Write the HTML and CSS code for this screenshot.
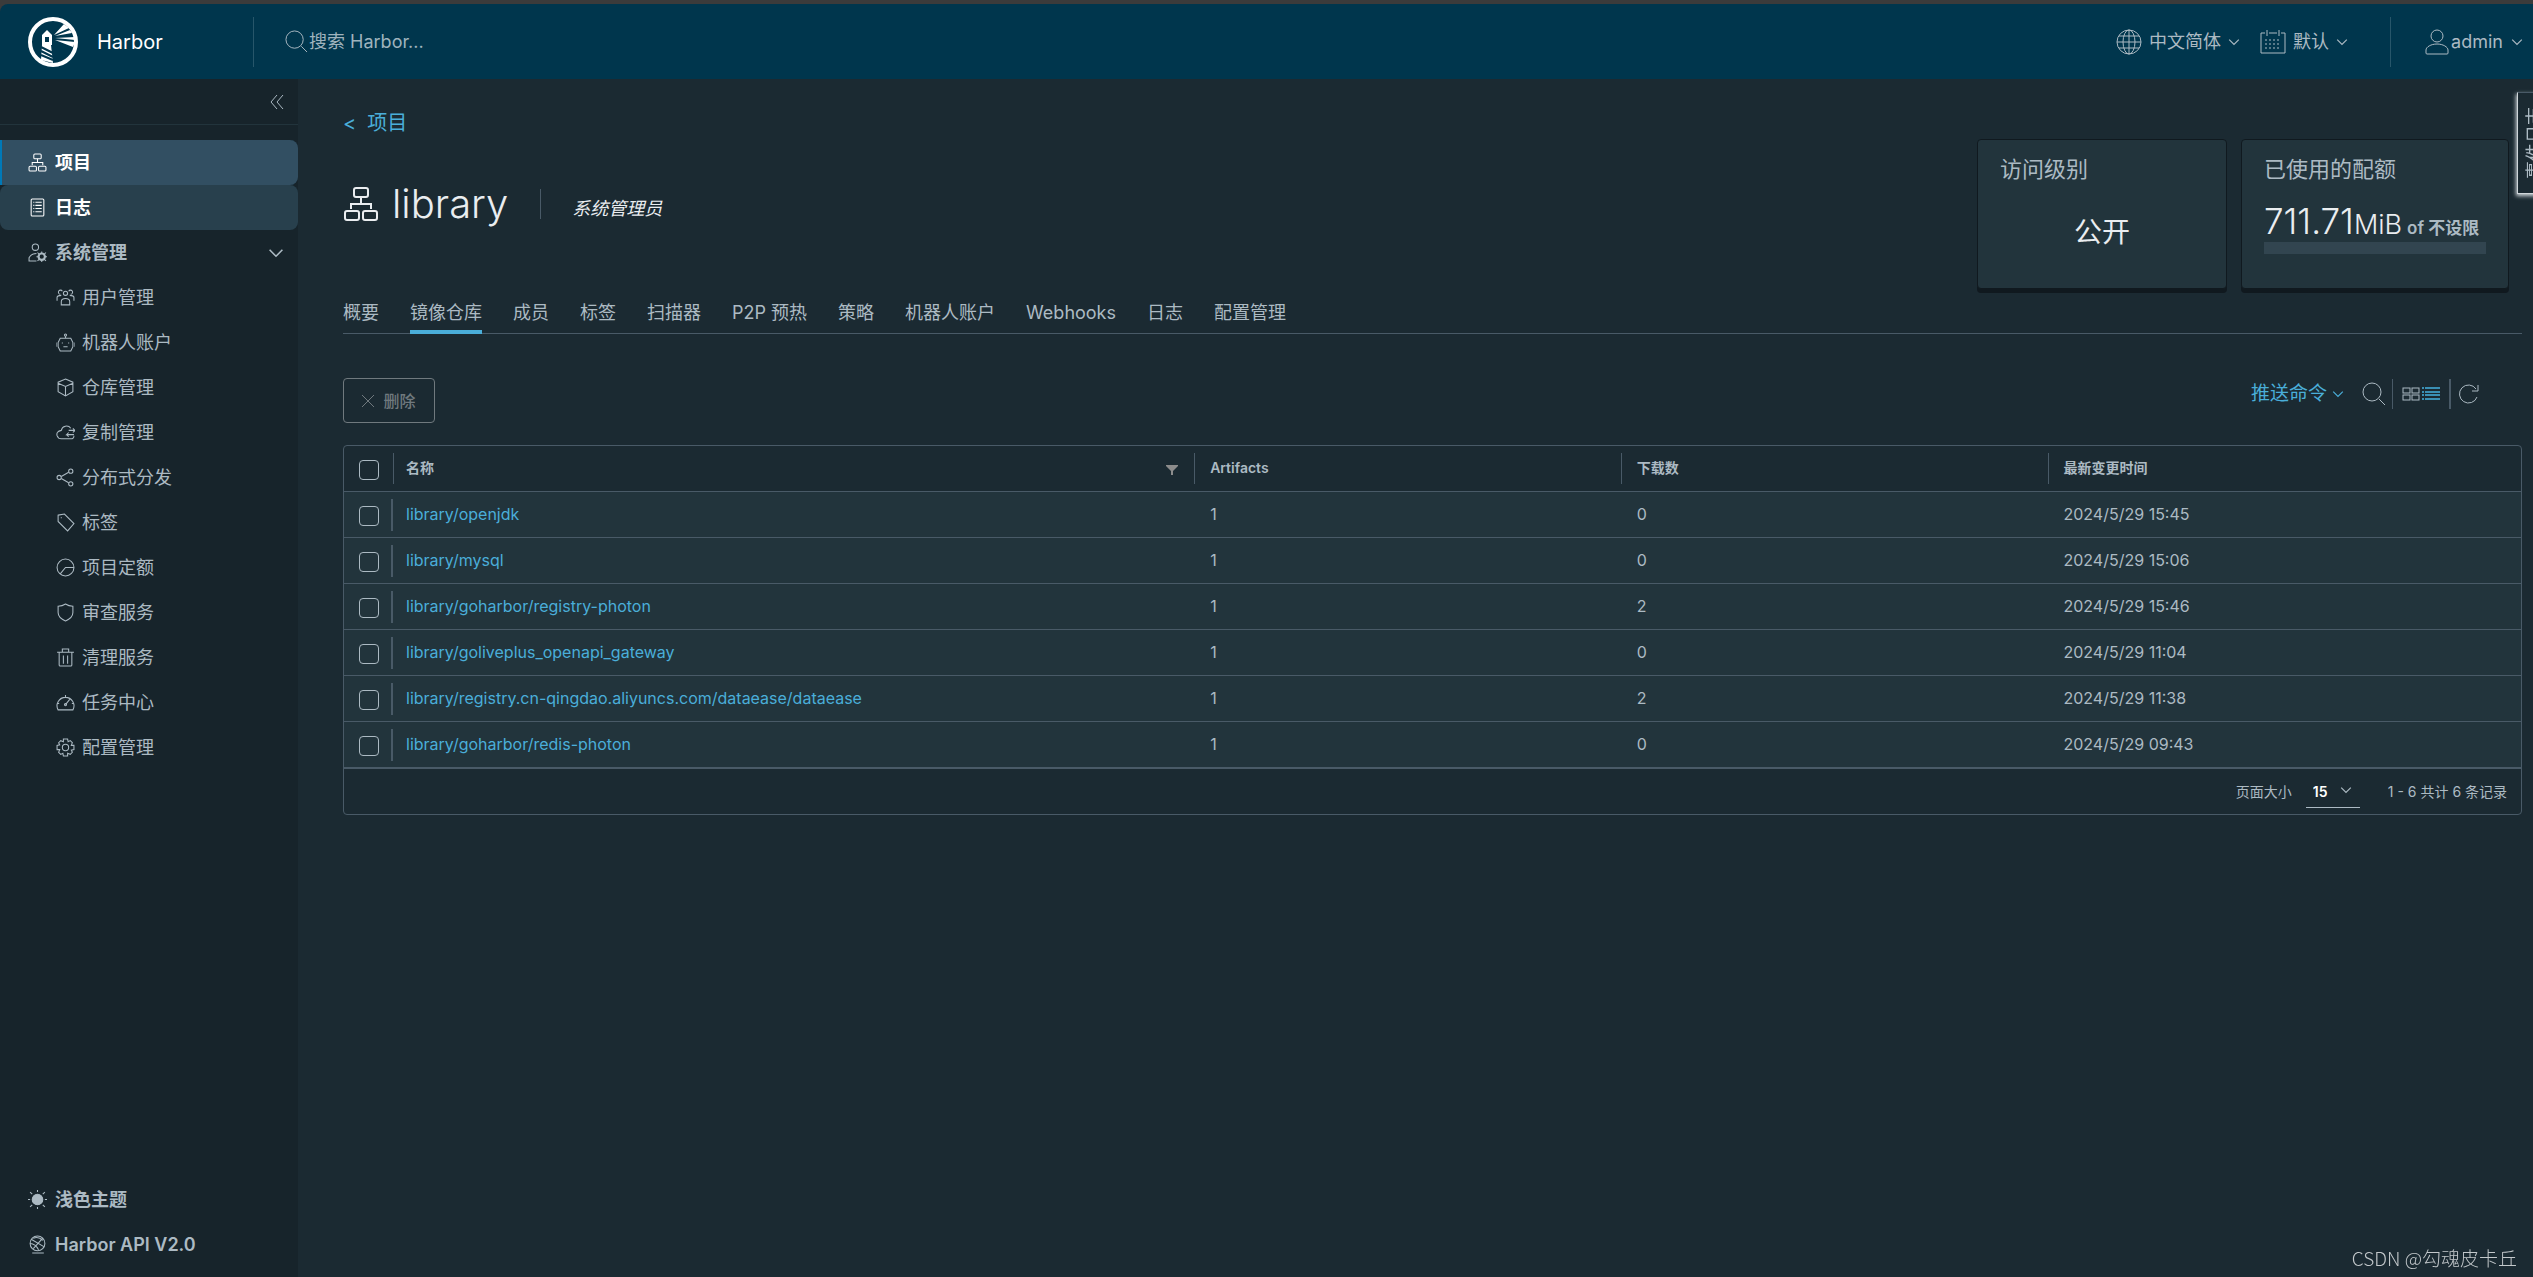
FILE: index.html
```html
<!DOCTYPE html>
<html lang="zh-CN">
<head>
<meta charset="utf-8">
<meta name="viewport" content="width=device-width, initial-scale=1">
<title>Harbor</title>
<link rel="stylesheet" href="styles.css">
</head>
<body>
<svg class="sprite" aria-hidden="true">
  <symbol id="chevron" viewBox="0 0 10 10"><path d="M1 3l4 4 4-4"/></symbol>
  <symbol id="search" viewBox="0 0 24 24"><circle cx="10" cy="10" r="9"/><path d="M17 17l6 6"/></symbol>
  <symbol id="projects" viewBox="0 0 36 36"><rect x="11" y="2" width="14" height="9" rx="2"/><rect x="2" y="25" width="14" height="9" rx="2"/><rect x="20" y="25" width="14" height="9" rx="2"/><path d="M18 11v7M8 23v-5h20v5"/></symbol>
</svg>

<header class="header">
  <a class="brand" href="#">
    <svg class="logo" viewBox="0 0 50 50"><circle cx="25" cy="25" r="23" fill="none" stroke="#fff" stroke-width="4"/><g fill="#fff"><path d="M19 13l5 5v1H14v-1z"/><path fill-rule="evenodd" d="M14 18h10v10H14zm3 2v5h4v-5z"/><path d="M14 28h9l2 18-12-3z"/><path d="M26 18L36 7l5 4zM27 19l15-6 2 3zM27 21l20-1v3zM27 23l20 2-2 5z"/></g><path d="M13 30l12 6M13 34l12 6M13 38l12 5" stroke="#00364d" stroke-width="2"/></svg>
    <span>Harbor</span>
  </a>
  <label class="search"><svg class="icon"><use href="#search"/></svg><input type="text" placeholder="搜索 Harbor..." aria-label="搜索 Harbor..."></label>
  <button class="menu lang" type="button"><svg class="icon globe" viewBox="0 0 26 26"><circle cx="13" cy="13" r="12"/><ellipse cx="13" cy="13" rx="6" ry="12"/><path d="M13 1v24M1 13h24M3 7h20M3 19h20"/></svg>中文简体<svg class="chev"><use href="#chevron"/></svg></button>
  <button class="menu" type="button"><svg class="icon calendar" viewBox="0 0 26 26"><path d="M5 4H1v20h24V4h-4M9 4h8M7 1v6M19 1v6"/><path d="M5 11h16M5 15h16M5 19h16" stroke-dasharray="2 2"/></svg>默认<svg class="chev"><use href="#chevron"/></svg></button>
  <button class="menu user" type="button"><svg class="icon" viewBox="0 0 24 26"><circle cx="12" cy="7" r="6"/><path d="M1 24v-3c0-3 5-6 11-6s11 3 11 6v3q0 1-1 1H2q-1 0-1-1z"/></svg>admin<svg class="chev"><use href="#chevron"/></svg></button>
</header>

<div class="shell">
  <nav class="sidebar" aria-label="导航">
    <div class="collapse"><button type="button" aria-label="收起"><svg class="icon" viewBox="0 0 14 14"><path d="M7 0L1 7l6 7M13 0L7 7l6 7"/></svg></button></div>
    <a class="item active" href="#"><svg class="icon"><use href="#projects"/></svg>项目</a>
    <a class="item hovered" href="#"><svg class="icon" viewBox="0 0 18 18"><rect x="3" y="1" width="12" height="16" rx="1"/><path d="M5 4h1M7 4h6M5 7h1M7 7h6M5 10h1M7 10h6M5 13h1M7 13h6"/></svg>日志</a>
    <a class="item" href="#"><svg class="icon" viewBox="0 0 18 18"><circle cx="7" cy="4" r="3"/><path d="M8 17H1v-3q2-4 7-4"/><circle cx="13" cy="13" r="3" stroke-width="2"/><path d="M13 8v2M13 16v2M8 13h2M16 13h2M9 9l2 2M15 15l2 2M17 9l-2 2M9 17l2-2"/></svg>系统管理<svg class="arrow"><use href="#chevron"/></svg></a>
    <div class="sub">
      <a class="item" href="#"><svg class="icon" viewBox="0 0 18 18"><circle cx="9" cy="5" r="2"/><path d="M5 16v-3q0-3 4-3t4 3v3zM6 3a2 2 0 1 0-2 3M12 3a2 2 0 1 1 2 3M1 12V9q0-2 4-2M17 12V9q0-2-4-2"/></svg>用户管理</a>
      <a class="item" href="#"><svg class="icon" viewBox="0 0 18 18"><circle cx="9" cy="2" r="1"/><path d="M9 3v2M4 5h10l2 4v4l-2 4H4l-2-4V9zM0 9v4M18 9v4M6 9v1M12 9v1M7 13h4"/></svg>机器人账户</a>
      <a class="item" href="#"><svg class="icon" viewBox="0 0 18 18"><path d="M9 1l7 3v9l-7 4-7-4V4zM2 5l7 3 7-3M9 8v9"/></svg>仓库管理</a>
      <a class="item" href="#"><svg class="icon" viewBox="0 0 18 18"><path d="M14 5A5 5 0 0 0 5 7Q0 8 1 12q1 3 4 3h9q3 0 3-3M17 11H10l2-2M10 11l2 2M12 7h6l-2-2M18 7l-2 2"/></svg>复制管理</a>
      <a class="item" href="#"><svg class="icon" viewBox="0 0 18 18"><circle cx="3" cy="9" r="2"/><circle cx="14" cy="3" r="2"/><circle cx="14" cy="15" r="2"/><path d="M5 8l7-4M5 10l7 4"/></svg>分布式分发</a>
      <a class="item" href="#"><svg class="icon" viewBox="0 0 18 18"><path d="M2 2l6-1 9 9-6 7-9-9zM5 4v1"/></svg>标签</a>
      <a class="item" href="#"><svg class="icon" viewBox="0 0 18 18"><circle cx="9" cy="9" r="8"/><path d="M17 9H9l-5 6"/></svg>项目定额</a>
      <a class="item" href="#"><svg class="icon" viewBox="0 0 18 18"><path d="M9 1q3 2 7 2v6q0 5-7 8-7-3-7-8V3q4 0 7-2z"/></svg>审查服务</a>
      <a class="item" href="#"><svg class="icon" viewBox="0 0 18 18"><path d="M1 4h16M3 4v12q0 1 1 1h10q1 0 1-1V4M6 4V1h6v3M7 7v8M11 7v8"/></svg>清理服务</a>
      <a class="item" href="#"><svg class="icon" viewBox="0 0 18 18"><path d="M2 16a8 8 0 1 1 14 0zM9 2v2M1 10h2M15 10h2M4 5l1 1M9 11l4-5"/><circle cx="9" cy="11" r="1"/></svg>任务中心</a>
      <a class="item" href="#"><svg class="icon" viewBox="0 0 18 18"><circle cx="9" cy="9" r="3"/><path d="M7 1h4l.5 2.500 2-1 2 2-1 2.500L17 7v4l-2.500.5 1 2-2 2-2.500-1L11 17H7l-.5-2.500-2 1-2-2 1-2.500L1 11V7l2.500-.5-1-2 2-2 2.500 1z"/></svg>配置管理</a>
    </div>
    <div class="bottom">
      <a class="item" href="#"><svg class="icon" viewBox="0 0 18 18"><circle cx="9" cy="9" r="5" fill="currentColor"/><path d="M9 0v2M9 16v2M0 9h2M16 9h2M2 2l2 2M14 14l2 2M16 2l-2 2M2 16l2-2"/></svg>浅色主题</a>
      <a class="item" href="#"><svg class="icon" viewBox="0 0 18 18"><circle cx="9" cy="8" r="7"/><path d="M3 4l12 7M14 3L5 13M5 3q5-2 9 2M2 8q5 0 8 6M4 17h11"/></svg>Harbor API V2.0</a>
    </div>
  </nav>

  <main class="main">
    <section class="head">
      <div class="title">
        <a class="back" href="#"><span>&lt;</span><span>项目</span></a>
        <div class="name"><svg class="icon"><use href="#projects"/></svg><h1>library</h1><em>系统管理员</em></div>
      </div>
      <div class="card access"><h2>访问级别</h2><p>公开</p></div>
      <div class="card quota"><h2>已使用的配额</h2>
        <p><span class="used">711.71</span><span class="unit">MiB</span> <b>of 不设限</b></p>
        <progress value="0" max="100" aria-label="已使用的配额"></progress>
      </div>
    </section>

    <nav class="tabs" aria-label="项目">
      <a href="#">概要</a><a class="current" href="#">镜像仓库</a><a href="#">成员</a><a href="#">标签</a><a href="#">扫描器</a><a href="#">P2P 预热</a><a href="#">策略</a><a href="#">机器人账户</a><a href="#">Webhooks</a><a href="#">日志</a><a href="#">配置管理</a>
    </nav>

    <div class="toolbar">
      <button class="delete" type="button" disabled><svg class="icon" viewBox="0 0 12 12"><path d="M0 0l12 12M12 0L0 12"/></svg>删除</button>
      <div class="tools">
        <button class="push" type="button">推送命令<svg class="chev"><use href="#chevron"/></svg></button>
        <button class="find" type="button" aria-label="搜索"><svg class="icon"><use href="#search"/></svg></button>
        <div class="views">
          <button type="button" aria-label="卡片"><svg class="icon" viewBox="0 0 18 16"><rect x="1" y="2" width="7" height="5"/><rect x="10" y="2" width="7" height="5"/><rect x="1" y="9" width="7" height="5"/><rect x="10" y="9" width="7" height="5"/></svg></button>
          <button class="on" type="button" aria-label="列表"><svg class="icon" viewBox="0 0 18 16"><path d="M0 2h2M3 2h15M0 6h2M3 6h15M0 9h2M3 9h15M0 13h2M3 13h15" stroke-width="2"/></svg></button>
        </div>
        <button class="refresh" type="button" aria-label="刷新"><svg class="icon" viewBox="0 0 20 20"><path d="M18 13A9 9 0 1 1 17 5M19 1v6h-6"/></svg></button>
      </div>
    </div>

    <div class="grid">
      <table>
        <colgroup><col class="c-check"><col class="c-name"><col class="c-num"><col class="c-num"><col></colgroup>
        <thead><tr>
          <th><input type="checkbox" aria-label="全选"></th>
          <th><div class="th">名称<button type="button" aria-label="筛选"><svg viewBox="0 0 12 10"><path d="M0 0h12v1L7 6v4H5V6L0 1z"/></svg></button></div></th>
          <th>Artifacts</th><th>下载数</th><th>最新变更时间</th>
        </tr></thead>
        <tbody>
          <tr><td><input type="checkbox" aria-label="library/openjdk"></td><td><a href="#">library/openjdk</a></td><td>1</td><td>0</td><td>2024/5/29 15:45</td></tr>
          <tr><td><input type="checkbox" aria-label="library/mysql"></td><td><a href="#">library/mysql</a></td><td>1</td><td>0</td><td>2024/5/29 15:06</td></tr>
          <tr><td><input type="checkbox" aria-label="library/goharbor/registry-photon"></td><td><a href="#">library/goharbor/registry-photon</a></td><td>1</td><td>2</td><td>2024/5/29 15:46</td></tr>
          <tr><td><input type="checkbox" aria-label="library/goliveplus_openapi_gateway"></td><td><a href="#">library/goliveplus_openapi_gateway</a></td><td>1</td><td>0</td><td>2024/5/29 11:04</td></tr>
          <tr><td><input type="checkbox" aria-label="library/registry.cn-qingdao.aliyuncs.com/dataease/dataease"></td><td><a href="#">library/registry.cn-qingdao.aliyuncs.com/dataease/dataease</a></td><td>1</td><td>2</td><td>2024/5/29 11:38</td></tr>
          <tr><td><input type="checkbox" aria-label="library/goharbor/redis-photon"></td><td><a href="#">library/goharbor/redis-photon</a></td><td>1</td><td>0</td><td>2024/5/29 09:43</td></tr>
        </tbody>
      </table>
      <div class="pager">
        <label for="size">页面大小</label>
        <span class="select"><select id="size"><option>15</option></select><svg><use href="#chevron"/></svg></span>
        <span>1 - 6 共计 6 条记录</span>
      </div>
    </div>
  </main>
</div>

<button class="events" type="button">事件日志</button>
<div class="watermark">CSDN @勾魂皮卡丘</div>
</body>
</html>
```
FILE: styles.css
```css
* { box-sizing: border-box; }
body {
  margin: 0;
  min-height: 100vh;
  display: flex;
  flex-direction: column;
  overflow-x: hidden;
  border-top: 4px solid #3b3b3b;
  background: #1b2a32;
  color: #acbac3;
  font: 18px/24px Inter, "Noto Sans CJK SC", sans-serif;
}
a { color: inherit; text-decoration: none; }
button { padding: 0; border: 0; background: none; color: inherit; font: inherit; }
svg { fill: none; stroke: currentColor; flex: none; }
h1, h2, p { margin: 0; font-weight: 400; }
.sprite { position: absolute; width: 0; height: 0; }
.chev { width: 12px; height: 12px; }

/* header */
.header {
  display: flex;
  align-items: center;
  height: 75px;
  padding: 0 10px 0 28px;
  background: #00364d;
  border-top-left-radius: 8px;
  box-shadow: -8px -8px 0 #3b3b3b;
}
.brand { display: flex; align-items: center; gap: 19px; width: 226px; height: 50px; border-right: 1px solid #27566a; color: #fff; font-size: 20px; }
.logo { width: 50px; height: 50px; stroke: none; }
.search { display: flex; align-items: center; gap: 1px; flex: 1; margin-left: 31px; }
.search svg { width: 23px; height: 23px; }
.search input { flex: 1; min-width: 0; padding: 0; border: 0; background: none; color: inherit; font: inherit; outline: 0; }
.search input::placeholder { color: #9fb3bd; opacity: 1; }
.menu { display: flex; align-items: center; gap: 7px; }
.menu .icon { width: 26px; height: 26px; }
.lang { margin-right: 20px; }
.user { height: 50px; margin-left: 42px; padding-left: 34px; gap: 2px; border-left: 1px solid #27566a; }
.user .icon { width: 24px; }
.user .chev { margin-left: 6px; }

/* sidebar */
.shell { flex: 1; display: flex; }
.sidebar { display: flex; flex-direction: column; width: 298px; padding-bottom: 10px; background: #17242b; flex: none; }
.collapse { display: flex; justify-content: flex-end; align-items: center; height: 46px; margin-bottom: 15px; padding: 0 14px 0 0; border-bottom: 1px solid #22343c; }
.collapse svg { display: block; width: 14px; height: 14px; }
.item { display: flex; align-items: center; gap: 8px; height: 45px; padding: 0 14px 0 28px; font-weight: 600; }
.item .icon { width: 19px; height: 19px; }
.item.active { background: #324f62; color: #fff; border-radius: 0 8px 8px 0; box-shadow: inset 2px 0 #0079b8; }
.item.hovered { background: #28404d; color: #fff; border-radius: 8px; }
.item .icon use { stroke-width: 2; }
.arrow { width: 16px; height: 16px; margin-left: auto; }
.sub .item { padding-left: 56px; gap: 7px; font-weight: 400; }
.bottom { margin-top: auto; }

/* project heading */
.main { flex: 1; min-width: 0; padding: 32px 11px 0 45px; }
.head { display: flex; align-items: flex-start; gap: 14px; padding-right: 13px; }
.title { flex: 1; }
.back { display: flex; gap: 11px; color: #4aaed9; font-size: 20px; }
.name { display: flex; align-items: center; height: 48px; margin-top: 45px; color: #eaedf0; }
.name .icon { width: 36px; height: 36px; stroke-width: 2; }
.name h1 { margin-left: 13px; padding-right: 32px; border-right: 1px solid #495a67; font-size: 40px; line-height: 30px; font-weight: 300; }
.name em { margin: 10px 0 0 31px; }
.card { height: 150px; margin-top: 28px; padding: 14px 22px; border: 1px solid #10191f; border-radius: 4px; box-shadow: 0 4px 0 #10191f; background: #22343c; }
.card h2 { font-size: 22px; line-height: 30px; }
.access { width: 250px; }
.access p { margin-top: 30px; text-align: center; color: #eaedf0; font-size: 28px; line-height: 36px; }
.quota { width: 268px; }
.quota p { margin-top: 16px; line-height: 0; white-space: nowrap; }
.used, .unit { color: #eaedf0; font-weight: 300; }
.used { font-size: 35px; line-height: 42px; }
.unit { font-size: 27px; }
.quota b { font-size: 17px; font-weight: 600; }
progress { display: block; appearance: none; width: 100%; height: 12px; border: 0; background: #324550; }
progress::-webkit-progress-bar { background: #324550; }
progress::-webkit-progress-value { background: #4aaed9; }

/* tabs */
.tabs { display: flex; gap: 31px; margin-top: 9px; box-shadow: inset 0 -1px #495a67; }
.tabs a { height: 36px; padding-top: 3px; }
.tabs .current { box-shadow: inset 0 -4px #4aaed9; }

/* toolbar */
.toolbar { display: flex; justify-content: space-between; margin-top: 44px; }
.delete { display: flex; align-items: center; justify-content: center; gap: 9px; width: 92px; height: 45px; border: 1px solid #70797e; border-radius: 4px; color: #70797e; font-size: 16px; font-weight: 500; }
.delete svg { width: 12px; height: 12px; }
.tools { display: flex; align-items: center; height: 30px; margin-top: 1px; padding-right: 43px; }
.tools .icon { display: block; }
.push { display: flex; align-items: center; gap: 5px; color: #4aaed9; font-size: 19px; }
.find { margin: 0 6px 0 18px; }
.find .icon { width: 24px; height: 24px; }
.views { display: flex; gap: 2px; height: 30px; align-items: center; padding: 0 9px; border: 1px solid #495a67; border-width: 0 2px 0 1px; }
.views .icon { width: 18px; height: 16px; }
.views .on { color: #3a8fb4; }
.refresh { margin-left: 8px; }
.refresh .icon { width: 20px; height: 20px; }

/* data grid */
.grid { margin-top: 22px; border: 1px solid #495a67; border-radius: 4px; }
table { width: 100%; table-layout: fixed; border-spacing: 0; font-size: 16px; }
.c-check { width: 49px; }
.c-name { width: 36.8%; }
.c-num { width: 19.6%; }
th, td { padding: 0 16px 2px; text-align: left; }
th { height: 45px; font-size: 14px; font-weight: 600; }
td { height: 46px; border-top: 1px solid #495a67; background: #22343c; }
th + th { background: linear-gradient(#495a67, #495a67) left center / 1px 31px no-repeat; }
td:first-child { background: linear-gradient(#495a67, #495a67) right center / 2px 32px no-repeat #22343c; }
tr > :first-child { padding: 0 0 0 15px; }
tr > :nth-child(2) { padding-left: 13px; }
td a { color: #4aaed9; }
input[type="checkbox"] { display: block; appearance: none; width: 20px; height: 20px; margin: 2px 0 0; border: 1px solid #acbac3; border-radius: 4px; }
.th { display: flex; justify-content: space-between; align-items: center; }
.th button { padding: 4px 0 0; }
.th svg { display: block; width: 12px; height: 10px; fill: #8c8c8c; stroke: none; }
.pager { display: flex; align-items: center; justify-content: flex-end; height: 47px; padding-right: 14px; border-top: 2px solid #495a67; font-size: 14px; }
.select { position: relative; width: 54px; margin: 0 28px 0 14px; }
.select select { appearance: none; width: 100%; height: 32px; padding: 2px 0 0 7px; border: 0; border-bottom: 1px solid #acbac3; border-radius: 0; background: none; color: #fff; font: 600 14px/24px Inter, sans-serif; }
.select svg { position: absolute; right: 8px; top: 8px; width: 12px; height: 12px; pointer-events: none; }

/* overlays */
.events { position: fixed; top: 92px; right: -15px; width: 31px; height: 102px; padding: 0 5px; border: 1px solid #cfd6da; border-top-color: #495a67; background: #1b2a32; box-shadow: -1px 2px 4px #cfd6da; writing-mode: sideways-lr; text-align: center; white-space: nowrap; }
.watermark { position: fixed; right: 16px; bottom: 7px; color: #c3c8cb; font-family: "Noto Sans CJK SC", sans-serif; font-size: 19px; font-weight: 300; }
```
